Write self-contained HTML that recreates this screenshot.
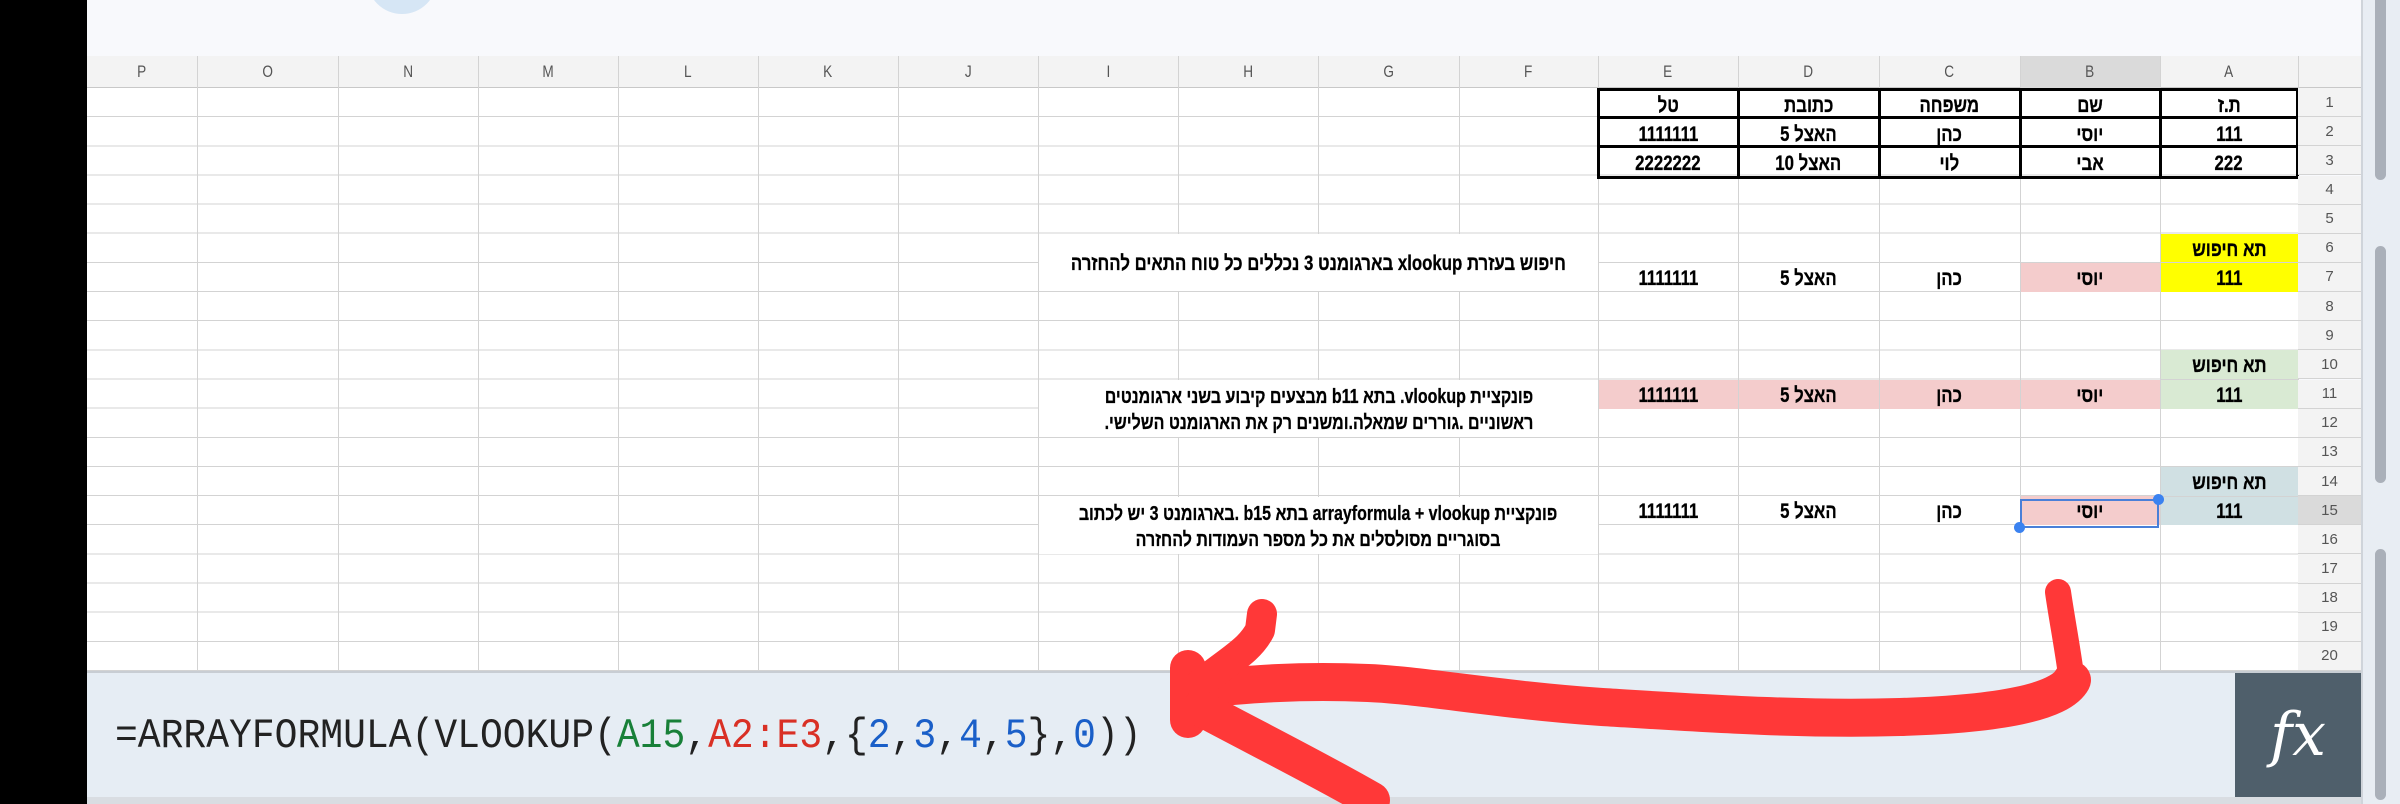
<!DOCTYPE html>
<html><head><meta charset="utf-8">
<style>
*{margin:0;padding:0;box-sizing:border-box}
body{width:2400px;height:804px;position:relative;overflow:hidden;background:#f8f9fc;font-family:"Liberation Sans","DejaVu Sans",sans-serif}
.a{position:absolute}
.c{position:absolute;display:flex;align-items:center;justify-content:center;font-weight:bold;font-size:21px;color:#000;white-space:nowrap;padding-top:3px}
.c span{display:inline-block;transform:scaleX(.8);-webkit-text-stroke:.3px #000}
.m span{transform:scaleX(.8);text-align:center;line-height:26px}
.vl{position:absolute;top:56px;width:1px;height:615px;background:#d3d3d3}
.hd{position:absolute;top:56px;height:32px;display:flex;align-items:center;justify-content:center;color:#555;font-size:17px}
.hd span{display:inline-block;transform:scaleX(.8)}
.rn{position:absolute;left:2298px;width:63px;display:flex;align-items:center;justify-content:center;color:#555;font-size:15px;border-bottom:1px solid #d3d3d3;background:#f3f3f3}
</style></head><body>
<div class="a" style="left:367px;top:-56px;width:70px;height:70px;border-radius:50%;background:#d6e6f5"></div>
<div class="a" style="left:0;top:0;width:87px;height:804px;background:#000"></div>
<div class="a" style="left:87px;top:56px;width:2211px;height:32px;background:#f3f3f3;border-bottom:1px solid #c8c8c8"></div>
<div class="a" style="left:87px;top:88px;width:2211px;height:583px;background-color:#fff;background-image:repeating-linear-gradient(to bottom,transparent 0,transparent 28.15px,#d3d3d3 28.15px,#d3d3d3 29.15px)"></div>
<div class="a" style="left:2020px;top:56px;width:140px;height:32px;background:#dadada"></div>
<div class="a" style="left:2160px;top:233.8px;width:138px;height:58.3px;background:#ffff00"></div>
<div class="a" style="left:2020px;top:262.9px;width:140px;height:29.1px;background:#f4cccc"></div>
<div class="a" style="left:2160px;top:350.4px;width:138px;height:58.3px;background:#d9ead3"></div>
<div class="a" style="left:1598px;top:379.5px;width:562px;height:29.2px;background:#f4cccc"></div>
<div class="a" style="left:2160px;top:467px;width:138px;height:58.3px;background:#d0e0e3"></div>
<div class="a" style="left:2020px;top:496.1px;width:140px;height:29.2px;background:#f4cccc"></div>
<div class="a" style="left:2160px;top:262.4px;width:138px;height:1px;background:#d3d3d3"></div>
<div class="a" style="left:2160px;top:379px;width:138px;height:1px;background:#d3d3d3"></div>
<div class="a" style="left:2160px;top:495.6px;width:138px;height:1px;background:#d3d3d3"></div>
<div class="vl" style="left:197px"></div><div class="vl" style="left:338px"></div><div class="vl" style="left:478px"></div><div class="vl" style="left:618px"></div><div class="vl" style="left:758px"></div><div class="vl" style="left:898px"></div><div class="vl" style="left:1038px"></div><div class="vl" style="left:1178px"></div><div class="vl" style="left:1318px"></div><div class="vl" style="left:1459px"></div><div class="vl" style="left:1598px"></div><div class="vl" style="left:1738px"></div><div class="vl" style="left:1879px"></div><div class="vl" style="left:2020px"></div><div class="vl" style="left:2160px"></div><div class="vl" style="left:2298px"></div>
<div class="c m" style="left:1039px;top:233.8px;width:559px;height:57.6px;background:#fff"><span dir="rtl">חיפוש בעזרת xlookup בארגומנט 3 נכללים כל טוח התאים להחזרה</span></div>
<div class="c m" style="left:1039px;top:380px;width:559px;height:57.3px;background:#fff;font-size:20px"><span dir="rtl">פונקציית vlookup. בתא b11 מבצעים קיבוע בשני ארגומנטים<br>ראשוניים .גוררים שמאלה.ומשנים רק את הארגומנט השלישי.</span></div>
<div class="c m" style="left:1039px;top:496.6px;width:559px;height:57.3px;background:#fff;font-size:20px"><span dir="rtl">פונקציית arrayformula + vlookup בתא b15 .בארגומנט 3 יש לכתוב<br>בסוגריים מסולסלים את כל מספר העמודות להחזרה</span></div>
<div class="hd" style="left:87px;width:110px"><span>P</span></div><div class="hd" style="left:197px;width:141px"><span>O</span></div><div class="hd" style="left:338px;width:140px"><span>N</span></div><div class="hd" style="left:478px;width:140px"><span>M</span></div><div class="hd" style="left:618px;width:140px"><span>L</span></div><div class="hd" style="left:758px;width:140px"><span>K</span></div><div class="hd" style="left:898px;width:140px"><span>J</span></div><div class="hd" style="left:1038px;width:140px"><span>I</span></div><div class="hd" style="left:1178px;width:140px"><span>H</span></div><div class="hd" style="left:1318px;width:141px"><span>G</span></div><div class="hd" style="left:1459px;width:139px"><span>F</span></div><div class="hd" style="left:1598px;width:140px"><span>E</span></div><div class="hd" style="left:1738px;width:141px"><span>D</span></div><div class="hd" style="left:1879px;width:141px"><span>C</span></div><div class="hd" style="left:2020px;width:140px"><span>B</span></div><div class="hd" style="left:2160px;width:138px"><span>A</span></div>
<div class="a" style="left:2298px;top:56px;width:63px;height:32px;background:#f3f3f3;border-left:1px solid #d3d3d3;border-bottom:1px solid #c8c8c8"></div>
<div class="a" style="left:1597px;top:88px;width:702px;height:91px;border:3px solid #000"></div>
<div class="a" style="left:1597px;top:116px;width:702px;height:3px;background:#000"></div>
<div class="a" style="left:1597px;top:145px;width:702px;height:3px;background:#000"></div>
<div class="a" style="left:1737px;top:88px;width:3px;height:91px;background:#000"></div>
<div class="a" style="left:1878px;top:88px;width:3px;height:91px;background:#000"></div>
<div class="a" style="left:2019px;top:88px;width:3px;height:91px;background:#000"></div>
<div class="a" style="left:2159px;top:88px;width:3px;height:91px;background:#000"></div>
<div class="c" style="left:2160px;top:90px;width:138px;height:28px"><span>ת.ז</span></div>
<div class="c" style="left:2020px;top:90px;width:140px;height:28px"><span>שם</span></div>
<div class="c" style="left:1879px;top:90px;width:141px;height:28px"><span>משפחה</span></div>
<div class="c" style="left:1738px;top:90px;width:141px;height:28px"><span>כתובת</span></div>
<div class="c" style="left:1598px;top:90px;width:140px;height:28px"><span>טל</span></div>
<div class="c" style="left:2160px;top:119px;width:138px;height:28px"><span>111</span></div>
<div class="c" style="left:2020px;top:119px;width:140px;height:28px"><span>יוסי</span></div>
<div class="c" style="left:1879px;top:119px;width:141px;height:28px"><span>כהן</span></div>
<div class="c" style="left:1738px;top:119px;width:141px;height:28px"><span dir="rtl">האצל 5</span></div>
<div class="c" style="left:1598px;top:119px;width:140px;height:28px"><span>1111111</span></div>
<div class="c" style="left:2160px;top:148px;width:138px;height:28px"><span>222</span></div>
<div class="c" style="left:2020px;top:148px;width:140px;height:28px"><span>אבי</span></div>
<div class="c" style="left:1879px;top:148px;width:141px;height:28px"><span>לוי</span></div>
<div class="c" style="left:1738px;top:148px;width:141px;height:28px"><span dir="rtl">האצל 10</span></div>
<div class="c" style="left:1598px;top:148px;width:140px;height:28px"><span>2222222</span></div>
<div class="c" style="left:2160px;top:234px;width:138px;height:29px"><span>תא חיפוש</span></div>
<div class="c" style="left:2160px;top:263px;width:138px;height:29px"><span>111</span></div>
<div class="c" style="left:2020px;top:263px;width:140px;height:29px"><span>יוסי</span></div>
<div class="c" style="left:1879px;top:263px;width:141px;height:29px"><span>כהן</span></div>
<div class="c" style="left:1738px;top:263px;width:141px;height:29px"><span dir="rtl">האצל 5</span></div>
<div class="c" style="left:1598px;top:263px;width:140px;height:29px"><span>1111111</span></div>
<div class="c" style="left:2160px;top:350px;width:138px;height:29px"><span>תא חיפוש</span></div>
<div class="c" style="left:2160px;top:380px;width:138px;height:29px"><span>111</span></div>
<div class="c" style="left:2020px;top:380px;width:140px;height:29px"><span>יוסי</span></div>
<div class="c" style="left:1879px;top:380px;width:141px;height:29px"><span>כהן</span></div>
<div class="c" style="left:1738px;top:380px;width:141px;height:29px"><span dir="rtl">האצל 5</span></div>
<div class="c" style="left:1598px;top:380px;width:140px;height:29px"><span>1111111</span></div>
<div class="c" style="left:2160px;top:467px;width:138px;height:29px"><span>תא חיפוש</span></div>
<div class="c" style="left:2160px;top:496px;width:138px;height:29px"><span>111</span></div>
<div class="c" style="left:2020px;top:496px;width:140px;height:29px"><span>יוסי</span></div>
<div class="c" style="left:1879px;top:496px;width:141px;height:29px"><span>כהן</span></div>
<div class="c" style="left:1738px;top:496px;width:141px;height:29px"><span dir="rtl">האצל 5</span></div>
<div class="c" style="left:1598px;top:496px;width:140px;height:29px"><span>1111111</span></div>
<div class="a" style="left:2020px;top:499px;width:139px;height:29px;border:2px solid #4a7fd8"></div>
<div class="a" style="left:2153px;top:494px;width:11px;height:11px;border-radius:50%;background:#3b82f0"></div>
<div class="a" style="left:2014px;top:522px;width:11px;height:11px;border-radius:50%;background:#3b82f0"></div>
<div class="rn" style="top:88px;height:29.2px">1</div><div class="rn" style="top:117.2px;height:29.1px">2</div><div class="rn" style="top:146.3px;height:29.2px">3</div><div class="rn" style="top:175.5px;height:29.1px">4</div><div class="rn" style="top:204.6px;height:29.2px">5</div><div class="rn" style="top:233.8px;height:29.1px">6</div><div class="rn" style="top:262.9px;height:29.1px">7</div><div class="rn" style="top:292px;height:29.2px">8</div><div class="rn" style="top:321.2px;height:29.2px">9</div><div class="rn" style="top:350.4px;height:29.1px">10</div><div class="rn" style="top:379.5px;height:29.2px">11</div><div class="rn" style="top:408.7px;height:29.1px">12</div><div class="rn" style="top:437.8px;height:29.2px">13</div><div class="rn" style="top:467px;height:29.1px">14</div><div class="rn" style="top:496.1px;height:29.2px;background:#dadada">15</div><div class="rn" style="top:525.3px;height:29.1px">16</div><div class="rn" style="top:554.4px;height:29.2px">17</div><div class="rn" style="top:583.6px;height:29.1px">18</div><div class="rn" style="top:612.7px;height:29.2px">19</div><div class="rn" style="top:641.9px;height:29.1px">20</div>
<div class="a" style="left:2361px;top:0;width:39px;height:804px;background:#e8edf3;border-left:2px solid #cfd4da"></div>
<div class="a" style="left:2375px;top:-10px;width:11px;height:190px;border-radius:6px;background:#aab0b9"></div>
<div class="a" style="left:2375px;top:246px;width:11px;height:237px;border-radius:6px;background:#aab0b9"></div>
<div class="a" style="left:2375px;top:549px;width:11px;height:251px;border-radius:6px;background:#aab0b9"></div>
<div class="a" style="left:87px;top:671px;width:2274px;height:126px;background:#e6edf4;border-top:2px solid #c8cdd3"></div>
<div class="a" style="left:87px;top:797px;width:2274px;height:7px;background:#d9dde2"></div>
<div class="a" style="left:115px;top:712px;font-family:'Liberation Mono',monospace;font-size:42px;color:#222;white-space:nowrap;transform:scaleX(.905);transform-origin:left center">=ARRAYFORMULA(VLOOKUP(<span style="color:#188038">A15</span>,<span style="color:#d93025">A2:E3</span>,{<span style="color:#1a5fc8">2</span>,<span style="color:#1a5fc8">3</span>,<span style="color:#1a5fc8">4</span>,<span style="color:#1a5fc8">5</span>},<span style="color:#1a5fc8">0</span>))</div>
<div class="a" style="left:2235px;top:673px;width:126px;height:124px;background:#4f5f6b;color:#fff;display:flex;align-items:center;justify-content:center;font-family:'DejaVu Serif','Liberation Serif',serif;font-style:italic;font-size:60px">fx</div>
<svg class="a" style="left:0;top:0" width="2400" height="804" viewBox="0 0 2400 804">
<g fill="none" stroke="#ff3838" stroke-linecap="round" stroke-linejoin="round">
<path d="M2058 592 C2062 620 2068 650 2072 682" stroke-width="26"/>
<path d="M2072 680 C2060 702 2000 714 1900 717 C1800 720 1700 713 1602 707 C1500 700 1420 685 1368 683 C1300 680 1250 684 1190 690" stroke-width="38"/>
<path d="M1188 668 L1188 720" stroke-width="36"/>
<path d="M1200 684 C1230 660 1250 650 1260 630 L1262 614" stroke-width="30"/>
<path d="M1200 708 C1260 740 1320 770 1372 800" stroke-width="36"/>
</g>
</svg>
</body></html>
